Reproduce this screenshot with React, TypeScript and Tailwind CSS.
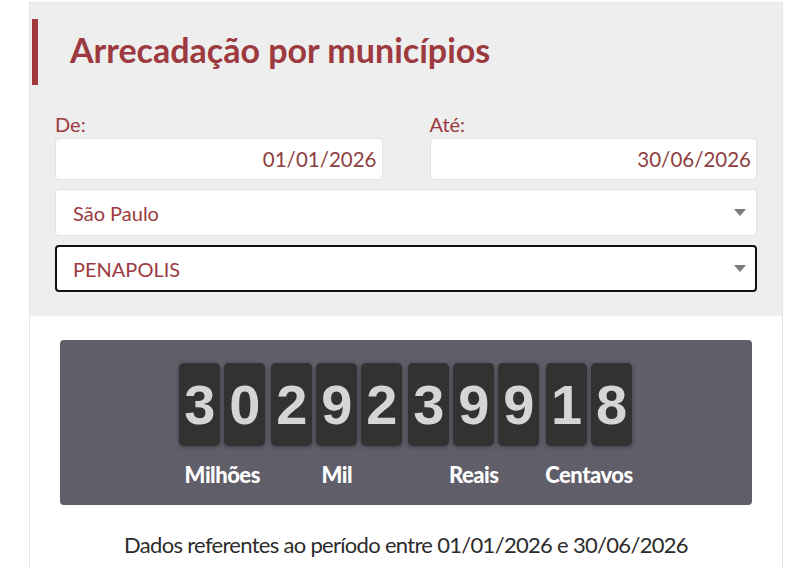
type DigitGroup = { label: string; digits: string };

const groups: DigitGroup[] = [
  { label: "Milhões", digits: "30" },
  { label: "Mil", digits: "292" },
  { label: "Reais", digits: "399" },
  { label: "Centavos", digits: "18" },
];

function Caret() {
  return (
    <svg width="12" height="7" viewBox="0 0 12 7" className="shrink-0">
      <path d="M0 0 L12 0 L6 7 Z" fill="#7a7a7a" />
    </svg>
  );
}

function DateField({ label, value }: { label: string; value: string }) {
  return (
    <div className="flex-1 flex flex-col">
      <label className="text-[20px] leading-[24px] text-[#9c3a3f] mb-[2px]">{label}</label>
      <div className="h-[42px] bg-white rounded-[4px] border border-[#e2e2e2] flex items-center justify-end pr-[5px] text-[20.5px] text-[#8e3f3f]">
        {value}
      </div>
    </div>
  );
}

function SelectBox({ value, focused }: { value: string; focused?: boolean }) {
  return (
    <div
      className={
        focused
          ? "h-[47px] bg-white rounded-[4px] border-2 border-[#111] flex items-center justify-between pl-[16px] pr-[9px] text-[20px] text-[#9c3a3f]"
          : "h-[47px] bg-white rounded-[4px] border border-[#e2e2e2] flex items-center justify-between pl-[17px] pr-[10px] text-[20px] text-[#9c3a3f]"
      }
    >
      <span>{value}</span>
      <Caret />
    </div>
  );
}

export default function App() {
  return (
    <div className="bg-white min-h-[568px] pl-[29px] pt-[2px] font-['Lato','Noto_Sans',sans-serif]">
      <div className="w-[754px] border border-[#e6e6e6]">
        {/* filter area */}
        <div className="bg-[#eeeeee] pt-[16px] pb-[24px]">
          <div className="ml-[2px] border-l-[6px] border-[#a2373e] h-[66px] pl-[32px] flex items-center">
            <h1 className="text-[34px] font-bold text-[#9c3a3f] leading-none pb-[4px]">
              Arrecadação por municípios
            </h1>
          </div>
          <div className="px-[25px] mt-[27px] flex flex-col gap-[9px]">
            <div className="flex gap-[47px]">
              <DateField label="De:" value="01/01/2026" />
              <DateField label="Até:" value="30/06/2026" />
            </div>
            <SelectBox value="São Paulo" />
            <SelectBox value="PENAPOLIS" focused />
          </div>
        </div>

        {/* counter */}
        <div className="px-[30px] pt-[24px] pb-[20px]">
          <div className="bg-[#5f5e69] rounded-[4px] h-[165px] pt-[23px] flex justify-center gap-[6px]">
            {groups.map((g) => (
              <div key={g.label} className="flex flex-col items-center">
                <div className="flex gap-[4px]">
                  {g.digits.split("").map((d, i) => (
                    <div
                      key={i}
                      className="w-[41px] h-[83px] rounded-[5px] bg-[#323232] shadow-[0_1px_4px_rgba(0,0,0,0.35)] flex items-center justify-center text-[56px] font-bold text-[#d5d5d5] font-['Liberation_Sans',Arial,sans-serif] leading-none"
                    >
                      {d}
                    </div>
                  ))}
                </div>
                <div className="mt-[16px] text-[22px] font-black text-white leading-[26px] tracking-[-0.5px]">
                  {g.label}
                </div>
              </div>
            ))}
          </div>
          <p className="mt-[26px] text-center text-[22px] leading-[28px] text-[#2c2c2c] tracking-[-0.7px]">
            Dados referentes ao período entre 01/01/2026 e 30/06/2026
          </p>
        </div>
      </div>
    </div>
  );
}
